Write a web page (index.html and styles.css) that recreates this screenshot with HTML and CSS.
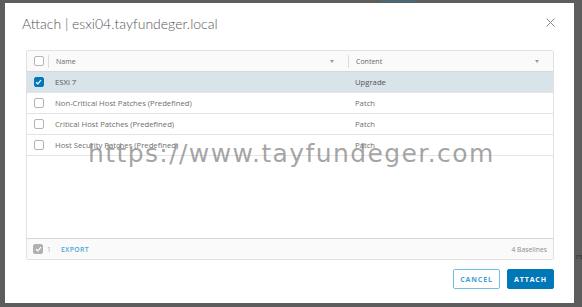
FILE: index.html
```html
<!DOCTYPE html>
<html>
<head>
<meta charset="utf-8">
<link rel="stylesheet" href="styles.css">
</head>
<body>
<div class="topmark"></div>
<div class="modal">
  <div class="header">
    <h1 class="title">Attach | esxi04.tayfundeger.local</h1>
    <svg class="close" width="9" height="9" viewBox="0 0 9 9"><path d="M0.5 0.5L8.5 8.5M8.5 0.5L0.5 8.5" stroke="#8a8a8a" stroke-width="1" fill="none"/></svg>
  </div>
  <div class="grid">
    <div class="row head">
      <div class="cell sel"><span class="cb"></span></div>
      <div class="cell name hcell"><span>Name</span><span class="tri"></span></div>
      <div class="cell content hcell"><span>Content</span><span class="tri"></span></div>
    </div>
    <div class="row selected">
      <div class="cell sel"><span class="cb checked"><svg width="7" height="6" viewBox="0 0 7 6"><path d="M1 3.2L2.8 4.8L6 1.2" stroke="#fff" stroke-width="1.2" fill="none"/></svg></span></div>
      <div class="cell name">ESXi 7</div>
      <div class="cell content">Upgrade</div>
    </div>
    <div class="row">
      <div class="cell sel"><span class="cb"></span></div>
      <div class="cell name">Non-Critical Host Patches (Predefined)</div>
      <div class="cell content">Patch</div>
    </div>
    <div class="row">
      <div class="cell sel"><span class="cb"></span></div>
      <div class="cell name">Critical Host Patches (Predefined)</div>
      <div class="cell content">Patch</div>
    </div>
    <div class="row">
      <div class="cell sel"><span class="cb"></span></div>
      <div class="cell name">Host Security Patches (Predefined)</div>
      <div class="cell content">Patch</div>
    </div>
    <div class="empty"></div>
    <div class="footer">
      <span class="cb grey"><svg width="7" height="6" viewBox="0 0 7 6"><path d="M1 3.2L2.8 4.8L6 1.2" stroke="#fff" stroke-width="1.2" fill="none"/></svg></span>
      <span class="count">1</span>
      <span class="export">EXPORT</span>
      <span class="total">4 Baselines</span>
    </div>
  </div>
  <div class="actions">
    <button class="btn outline">CANCEL</button>
    <button class="btn primary">ATTACH</button>
  </div>
  <div class="watermark">https://www.tayfundeger.com</div>
</div>
<div class="sidetext">rs</div>
</body>
</html>
```

FILE: styles.css
```css
html, body {
  margin: 0;
  padding: 0;
}
body {
  width: 582px;
  height: 307px;
  background: #5d5d5d;
  overflow: hidden;
  position: relative;
  font-family: "Open Sans", sans-serif;
}
.topmark {
  position: absolute;
  left: 380px;
  top: 0;
  width: 36px;
  height: 2px;
  background: #4a6878;
}
.sidetext {
  position: absolute;
  left: 576px;
  top: 250px;
  font-size: 8px;
  color: #2e2e2e;
}
.modal {
  position: relative;
  margin: 3px 0 0 5px;
  width: 569px;
  height: 300px;
  background: #fff;
  box-sizing: border-box;
  padding: 0 20px 0 21px;
  display: flex;
  flex-direction: column;
}
.header {
  display: flex;
  justify-content: space-between;
  align-items: flex-start;
  height: 47px;
}
.title {
  margin: 12px 0 0 -4px;
  font-family: "Lato", sans-serif;
  font-size: 14px;
  font-weight: 300;
  color: #555;
}
.close {
  margin: 15px -1px 0 0;
}
.grid {
  border: 1px solid #e1e1e1;
  border-radius: 2px;
  display: flex;
  flex-direction: column;
  height: 210px;
  box-sizing: border-box;
}
.row {
  display: flex;
  height: 21px;
  border-bottom: 1px solid #e4e4e4;
  box-sizing: border-box;
  align-items: center;
  font-size: 7.7px;
  color: #6e6e6e;
}
.row.head {
  background: #fafafa;
  color: #666;
  font-size: 7px;
  border-bottom: 1px solid #d8d8d8;
}
.row.selected {
  background: #d8e3ea;
  color: #555;
}
.cell {
  box-sizing: border-box;
  color: inherit;
}
.sel {
  width: 21px;
  display: flex;
  justify-content: center;
  padding-left: 2px;
}
.name {
  width: 300px;
  padding-left: 7px;
}
.content {
  flex: 1;
  padding-left: 7px;
}
.hcell {
  display: flex;
  align-items: center;
  justify-content: space-between;
  height: 13px;
  border-left: 1px solid #ddd;
  padding-right: 14px;
}
.tri {
  width: 0;
  height: 0;
  border-left: 2.5px solid transparent;
  border-right: 2.5px solid transparent;
  border-top: 3.5px solid #9a9a9a;
}
.cb {
  width: 8px;
  height: 8px;
  border: 1px solid #b5b5b5;
  border-radius: 2px;
  background: #fff;
  display: inline-flex;
  align-items: center;
  justify-content: center;
}
.cb.checked {
  background: #0079b8;
  border-color: #0079b8;
}
.empty {
  flex: 1;
}
.footer {
  height: 20px;
  border-top: 1px solid #d6d6d6;
  background: #fafafa;
  display: flex;
  align-items: center;
  padding: 0 6px 0 6px;
  font-size: 6.8px;
  color: #888;
}
.cb.grey {
  background: #b0b0b0;
  border-color: #b0b0b0;
}
.count {
  margin-left: 4px;
  color: #aaa;
}
.export {
  margin-left: 10px;
  color: #49a7d6;
  letter-spacing: 0.4px;
  font-weight: 600;
}
.total {
  margin-left: auto;
  color: #8a8a8a;
}
.actions {
  display: flex;
  justify-content: flex-end;
  gap: 7px;
  margin-top: 9px;
}
.btn {
  height: 20px;
  padding: 0;
  font-family: "Open Sans", sans-serif;
  font-size: 7px;
  font-weight: 700;
  letter-spacing: 0.9px;
  border-radius: 2px;
  box-sizing: border-box;
}
.btn.outline {
  width: 47px;
  background: #fff;
  border: 1px solid #6fc0e6;
  color: #3fa0d0;
}
.btn.primary {
  width: 47px;
  background: #0077b6;
  border: 1px solid #0077b6;
  color: #fff;
}
.watermark {
  position: absolute;
  left: 83px;
  top: 136px;
  font-family: "DejaVu Sans", sans-serif;
  font-size: 25px;
  letter-spacing: 1.4px;
  color: rgba(130, 130, 130, 0.72);
  white-space: nowrap;
  pointer-events: none;
}
```
